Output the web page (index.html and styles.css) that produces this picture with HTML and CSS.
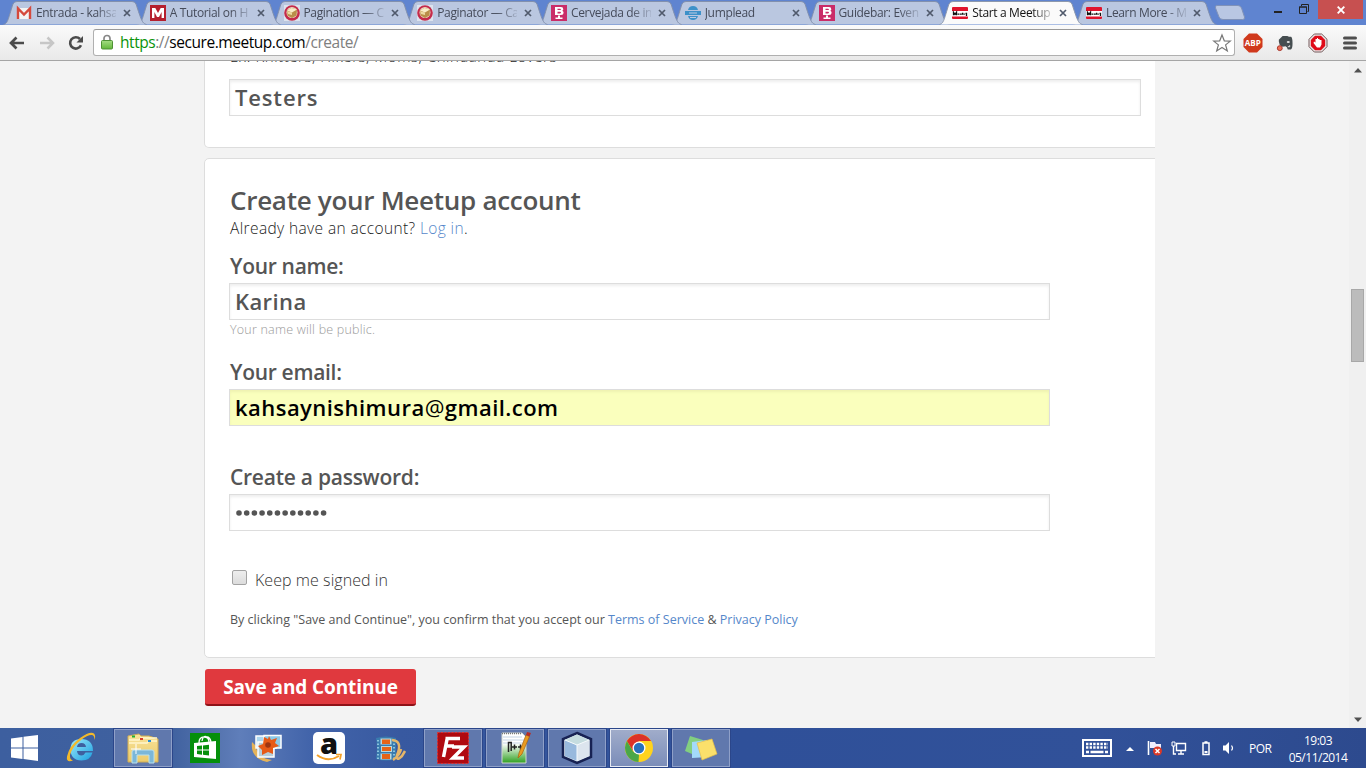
FILE: index.html
```html
<!DOCTYPE html>
<html lang="en">
<head>
<meta charset="utf-8">
<title>Start a Meetup</title>
<link rel="stylesheet" href="styles.css">
</head>
<body>
<svg class="defs" width="0" height="0" aria-hidden="true">
  <defs>
    <linearGradient id="lock" x1="0" y1="0" x2="0" y2="1"><stop offset="0" stop-color="#a5dc84"/><stop offset="1" stop-color="#62b83a"/></linearGradient>
    <linearGradient id="ie" x1="0" y1="0" x2="1" y2="1"><stop offset="0" stop-color="#9be9fb"/><stop offset="1" stop-color="#1b9fe0"/></linearGradient>
    <linearGradient id="npp" x1="0" y1="0" x2="0" y2="1"><stop offset=".35" stop-color="#fff"/><stop offset="1" stop-color="#2fa020"/></linearGradient>
    <linearGradient id="folder" x1="0" y1="0" x2="0" y2="1"><stop offset="0" stop-color="#f8e39a"/><stop offset="1" stop-color="#eccb6a"/></linearGradient>
    <symbol id="tab-shape" viewBox="0 0 144 25"><path d="M.5 24.5C5 23.5 5 19 10 4Q11 1.500 14 1.500H129Q132 1.500 133 4C138 19 139 23.500 143.500 24.500"/></symbol>
    <symbol id="close" viewBox="0 0 8 8"><path d="M1 1l6 6M7 1L1 7" stroke="#505a6c" stroke-width="1.700"/></symbol>
    <symbol id="cake" viewBox="0 0 16 16"><path fill="#dce3ee" d="M0 0h16v16H0z"/><circle cx="8" cy="8" r="7.800" fill="#c42b4b"/><circle cx="8" cy="7.500" r="5.500" fill="#ecd9c0"/><path d="M3 5.500L7.500 3l5.500 1.500-.5 6L8 13l-4.500-2.500z" fill="#b98e48"/><path d="M3 5.500L7.500 3l5.500 1.500L8 7.500z" fill="#f9edc8"/><path d="M3 6l5 1.500V10L4 9z" fill="#ecd9a0"/></symbol>
    <symbol id="badge" viewBox="0 0 16 16"><path fill="#ca2c68" d="M0 0h16v16H0z"/><path fill="#fff" d="M4 2h6q2.300 0 2.300 2.200 0 1.200-1.100 1.600 1.400.400 1.400 1.900 0 2.300-2.600 2.300H4zM7 10.500h2v2h2.500V14h-7v-1.500H7z"/><path fill="#ca2c68" d="M6.500 3.700H9q.900 0 .900.700t-.900.700H6.500zM6.500 6.800H9q1 0 1 .800t-1 .800H6.500z"/></symbol>
    <symbol id="meetup" viewBox="0 0 16 12"><rect width="16" height="12" rx="1" fill="#e0142c"/><path fill="#fff" d="M0 4h16v5.500H0z"/><path d="M1.500 8.200V5.300l1.500 2 1.500-2v2.900M5.500 7.200h2M8 7.200h1.800M10.600 5.800v2M11.500 7.200h1.300M13.500 6.500h1v2.500" stroke="#111" stroke-width="1.300" fill="none"/></symbol>
  </defs>
</svg>
<header class="tabs">
  <div class="tab" style="--i:9"><svg class="shape"><use href="#tab-shape"/></svg><svg class="fav" viewBox="0 0 16 16"><path fill="#f3f3f3" d="M1 3h14v11H1z"/><path fill="none" stroke="#d5493c" stroke-width="2.400" d="M2 14V3.500L8 9.500l6-6V14"/></svg><span class="title">Entrada - kahsa</span><svg class="x"><use href="#close"/></svg></div>
  <div class="tab" style="--i:8"><svg class="shape"><use href="#tab-shape"/></svg><svg class="fav" viewBox="0 0 16 16"><path fill="#b51f2e" d="M0 0h16v16H0z"/><path fill="#fff" d="M2 13V3h3.300L8 8l2.700-5H14v10h-2.400V7L9 12H7L4.400 7v6z"/></svg><span class="title">A Tutorial on H</span><svg class="x"><use href="#close"/></svg></div>
  <div class="tab" style="--i:7"><svg class="shape"><use href="#tab-shape"/></svg><svg class="fav"><use href="#cake"/></svg><span class="title">Pagination — C</span><svg class="x"><use href="#close"/></svg></div>
  <div class="tab" style="--i:6"><svg class="shape"><use href="#tab-shape"/></svg><svg class="fav"><use href="#cake"/></svg><span class="title">Paginator — Ca</span><svg class="x"><use href="#close"/></svg></div>
  <div class="tab" style="--i:5"><svg class="shape"><use href="#tab-shape"/></svg><svg class="fav"><use href="#badge"/></svg><span class="title">Cervejada de in</span><svg class="x"><use href="#close"/></svg></div>
  <div class="tab" style="--i:4"><svg class="shape"><use href="#tab-shape"/></svg><svg class="fav" viewBox="0 0 16 16"><path fill="#3d91c9" d="M3 5q1-4 5-4t5 4zM0 6h16v4H0zM3 11h10q-1 4-5 4t-5-4z"/><path d="M4 8h8M5 12.500h6" stroke="#bccae1"/></svg><span class="title">Jumplead</span><svg class="x"><use href="#close"/></svg></div>
  <div class="tab" style="--i:3"><svg class="shape"><use href="#tab-shape"/></svg><svg class="fav"><use href="#badge"/></svg><span class="title">Guidebar: Even</span><svg class="x"><use href="#close"/></svg></div>
  <div class="tab active" style="--i:12"><svg class="shape"><use href="#tab-shape"/></svg><svg class="fav"><use href="#meetup"/></svg><span class="title">Start a Meetup</span><svg class="x"><use href="#close"/></svg></div>
  <div class="tab" style="--i:1"><svg class="shape"><use href="#tab-shape"/></svg><svg class="fav"><use href="#meetup"/></svg><span class="title">Learn More - M</span><svg class="x"><use href="#close"/></svg></div>
  <svg class="newtab" viewBox="0 0 32 16"><path d="M3 .500h21q2.500 0 3.500 2.500l3 9q.800 2.500-2 2.500H9q-3 0-4-2.500L1.500 3Q.800.500 3 .500z" fill="#b9c7e3" stroke="#8092b8"/></svg>
  <div class="wincontrols">
    <svg class="min" viewBox="0 0 8 2"><path d="M0 0h8v2H0z" fill="#222"/></svg>
    <svg class="restore" viewBox="0 0 10 10"><path d="M.500 3h7v6.500h-7zM0 3h8M2.500 2V.500h7v7H8.500" fill="none" stroke="#222"/></svg>
    <div class="winclose"><svg viewBox="0 0 8 8"><path d="M.700.700l6.600 6.600M7.300.700L.700 7.300" stroke="#fff" stroke-width="1.900"/></svg></div>
  </div>
</header>
<nav class="toolbar">
  <svg class="back" viewBox="0 0 16 14"><path d="M15 7H2M7.500 1.500L2 7l5.500 5.500" fill="none" stroke="#4b4b4b" stroke-width="2.700"/></svg>
  <svg class="fwd" viewBox="0 0 16 14"><path d="M1 7h13M8.500 1.500L14 7l-5.500 5.500" fill="none" stroke="#c6c6c6" stroke-width="2.500"/></svg>
  <svg class="reload" viewBox="0 0 16 16"><path d="M13 10.300A5.700 5.700 0 1 1 12 4" fill="none" stroke="#4b4b4b" stroke-width="2.600"/><path d="M15 1v6.500H8.500z" fill="#4b4b4b"/></svg>
  <div class="urlbar">
    <svg class="lock" viewBox="0 0 12 16"><path d="M3 8V4.500a3 3 0 0 1 6 0V8" fill="none" stroke="#888" stroke-width="1.700"/><rect x=".5" y="6.500" width="11" height="8.500" rx="1" fill="url(#lock)" stroke="#4e9135"/></svg>
    <span class="url"><span class="scheme">https</span>://<b>secure.meetup.com</b>/create/</span>
    <svg class="star" viewBox="0 0 18 18"><path d="M9 1l2.300 5.800 6 .300-4.700 3.800 1.700 6L9 13.500l-5.300 3.400 1.700-6L.700 7.100l6-.300z" fill="#fff" stroke="#777" stroke-width="1.200"/></svg>
  </div>
  <svg class="ext abp" viewBox="0 0 20 20"><path d="M6 .500h8L19.500 6v8L14 19.500H6L.500 14V6z" fill="#d0391c"/><text x="9.800" y="13.300" text-anchor="middle" textLength="16" lengthAdjust="spacingAndGlyphs" class="abptext">ABP</text></svg>
  <svg class="ext ever" viewBox="0 0 18 18"><path d="M3 6l4-4h5q1.500 1 4 1 1.500 1 1.500 7 0 6-2 6.500h-3l-1-2.500-1.500-1-3 .5-3-1.500-1-4z" fill="#454d50"/><path d="M12 8h2v1h-2zM12.500 13.500h2V12" stroke="#ddd" fill="#ddd"/><circle cx="4" cy="15" r="2.600" fill="#f07058" stroke="#a63328"/></svg>
  <svg class="ext hand" viewBox="0 0 20 20"><path d="M6.300 1h7.400L19 6.300v7.400L13.700 19H6.300L1 13.700V6.300z" fill="#e8e8e8" stroke="#76595a"/><path d="M7 2.800h6L17.200 7v6L13 17.200H7L2.800 13V7z" fill="#e00b18"/><path d="M6 8.500l1.500 1V6H9V5h1v1h1v.500h1V7h1.500v4.500L12 14.500H9L5.500 10z" fill="#fff"/></svg>
  <svg class="menu" viewBox="0 0 14 14"><path d="M1.500 2h11M1.500 7h11M1.500 12h11" stroke="#4f4f4f" stroke-width="3" stroke-linecap="round"/></svg>
</nav>
<main class="viewport">
  <div class="page">
    <section class="card first">
      <p class="hint">Ex: Knitters, Hikers, Moms, Chihuahua Lovers</p>
      <div class="field"><span class="t-testers">Testers</span></div>
    </section>
    <section class="card account">
      <h1>Create your Meetup account</h1>
      <p class="login">Already have an account? <a>Log in</a>.</p>
      <label class="l-name">Your name:</label>
      <div class="field"><span class="t-karina">Karina</span></div>
      <p class="note">Your name will be public.</p>
      <label class="l-email">Your email:</label>
      <div class="field autofill"><span class="t-mail">kahsaynishimura<span class="at">@</span>gmail.com</span></div>
      <label class="l-pass">Create a password:</label>
      <div class="field"><svg class="dots" viewBox="0 0 92 6"><path d="M4 3h88" stroke="#555" stroke-width="5.600" stroke-linecap="round" stroke-dasharray="0 7.690"/></svg></div>
      <div class="keep"><i class="checkbox"></i><span>Keep me signed in</span></div>
      <p class="terms">By clicking "Save and Continue", you confirm that you accept our <a>Terms of Service</a> &amp; <a>Privacy Policy</a></p>
    </section>
    <div class="save"><span>Save and Continue</span></div>
  </div>
  <div class="scrollbar">
    <svg viewBox="0 0 8 5"><path d="M4 0l4 4.500H0z" fill="#505050"/></svg>
    <div class="thumb"></div>
    <svg viewBox="0 0 8 5"><path d="M0 .500h8L4 5z" fill="#505050"/></svg>
  </div>
</main>
<footer class="taskbar">
  <div class="start"><svg viewBox="0 0 27 26"><path d="M0 3.500L11.500 2v10.500H0zM12.500 1.800L27 0v12.500H12.500zM0 13.500h11.500V24L0 22.500zM12.500 13.500H27V26l-14.500-1.900z" fill="#fff"/></svg></div>
  <div class="app"><svg viewBox="0 0 32 32"><path d="M27.500 20.500q-2 8-11 8Q5.500 28 5.500 17.500T16 7Q28 7 28 19H12q.500 4.500 4.500 4.500 2.500 0 4-3zM12 15h9q-.500-4-4.500-4T12 15z" fill="url(#ie)" fill-rule="evenodd"/><path d="M8 28.500q-7 2.500-6-4Q4 14 15 6q10-7 14-4.500 2 2 .500 6.500 0-4.500-2.500-5-4-.500-11 5Q7 15 5 23q-.500 4.500 3 5.500z" fill="#f3b92b"/></svg></div>
  <div class="app framed"><svg viewBox="0 0 32 32"><path d="M1 4l11-2 2 2h8l9 3v23H1z" fill="url(#folder)" stroke="#d1ad56"/><path d="M2 8h10l2-2h16M2 11h18l2-2h8" stroke="#fff6cd" stroke-width="1.500" fill="none"/><path fill="#20b030" d="M5 3.500h3v2H5z"/><path fill="#da3e2a" d="M13 6h3v2h-3z"/><path fill="#258ed8" d="M21 8h3v2h-3z"/><path d="M5 31V20q0-2 2-2h18q2 0 2 2v11h-5v-8H10v8z" fill="#7bb7d8" stroke="#b9e0ee"/><path d="M9 12v10M4 17h10" stroke="#fff"/></svg></div>
  <div class="app"><svg viewBox="0 0 32 32"><path fill="#058f0b" d="M1 1h30v30H1z"/><path d="M5 11l22-2v18L5 25z" fill="#fff"/><path d="M10 11q0-6 5-6t5 5M13 9q1-6 5-4 3 0 4 5" fill="none" stroke="#fff" stroke-width="1.300"/><path d="M8 14l5-.500v4H8zM14 13.400l6-.700v4.800h-6zM8 18.500h5v4.200L8 22zM14 18.500h6v5l-6-.700z" fill="#058f0b"/></svg></div>
  <div class="app"><svg viewBox="0 0 32 32"><path d="M1 10q-2 16 15 20l5-2Q6 26 5 14z" fill="#e5b35a"/><path d="M5 4h20v12H5z" fill="#acd7ef" stroke="#fff" stroke-width="1.500"/><path d="M7 10h16v15H7z" fill="#b6ceda" stroke="#fff" stroke-width="1.500"/><path d="M13 3.500h17V16H13z" fill="#8dcae8" stroke="#fff" stroke-width="1.500"/><path d="M18 4l2 4 6-2-2 5 4 3-6 2v6l-5-2-6 3v-5l-4-4 5-2 1-7 4 2z" fill="#e65a17"/><circle cx="17" cy="13" r="2.800" fill="#9d3512"/></svg></div>
  <div class="app"><svg viewBox="0 0 32 32"><rect width="32" height="32" rx="5" fill="#fff"/><text x="16" y="21.500" text-anchor="middle" class="amazon">a</text><path d="M4 23q11 8 22 1" fill="none" stroke="#f4a129" stroke-width="2"/><path d="M23 22.500h5l-1 5" fill="none" stroke="#f4a129" stroke-width="1.700"/></svg></div>
  <div class="app"><svg viewBox="0 0 32 32"><path d="M1 6q10-3 20 0v21q-10 3-20 0Q3 16 1 6z" fill="#397bae"/><path d="M5.500 6.500h11v6h-11zM6 14h11v6H6zM5.500 21.500h11v6h-11z" fill="#b9d8dc"/><path d="M7 7.500h8V12H7zM7 15h9v4H7zM7 22h8v5H7z" fill="#e66417"/><path d="M3 8v19M19 8v19" stroke="#a6dbec" stroke-width="1.500" stroke-dasharray="1.500 2"/><path d="M17 8q11 1 5 15-1 7 5 1l3-5M18 28q7-5 8-11" fill="none" stroke="#e5b669" stroke-width="2.500"/></svg></div>
  <div class="app framed"><svg viewBox="0 0 32 32"><path fill="#b00a10" stroke="#d33" stroke-dasharray="2 1.500" d="M.500.500h31v31H.500z"/><path d="M8.500 6.500H23M9 14h8M10.500 5L6.500 25M15 15h12L16 26h11" fill="none" stroke="#fff" stroke-width="3.500"/></svg></div>
  <div class="app framed"><svg viewBox="0 0 32 32"><path d="M3 1h20l4 4v26H3z" fill="url(#npp)" stroke="#d0d6d0"/><path d="M4 5h19M4 8h22M4 11h22" stroke="#c4d4e4"/><path d="M3 1.500h19" stroke="#777" stroke-dasharray="1 1" stroke-width="1.500"/><path d="M9.500 20v-9.500h2.700V19M13 15h5M15.500 12.500v5M19 15h5M21.500 12.500v5" fill="none" stroke="#222" stroke-width="1.500"/><path d="M19 26l1-5L27 3l3.500 1.500L23 22z" fill="#e99b21" stroke="#a76210" stroke-width=".7"/><path d="M27 3l1-3 4 1-1.500 3.500z" fill="#b92d24"/></svg></div>
  <div class="app framed"><svg viewBox="0 0 32 32"><path d="M16 1l14 6v18l-14 6-14-6V7z" fill="#e3edf4" stroke="#172253" stroke-width="2.500"/><path d="M4 8l12 5v16L4 24z" fill="#98b9dd"/><path d="M4 8l12-5.500L28 8l-12 5z" fill="#c5dcdf"/><path d="M16 13l12-5v16l-12 5z" fill="#dce5ee"/><path d="M4 8l12 5 12-5M16 13v16" fill="none" stroke="#f5fafc"/></svg></div>
  <div class="app framed current"><svg viewBox="0 0 32 32"><circle cx="16" cy="16" r="14" fill="#ffd31d"/><path d="M16 9h12.100A14 14 0 0 0 3.900 9L10 19z" fill="#dc3227"/><path d="M3.900 9L10 19.500l6 3L15.500 30A14 14 0 0 1 3.900 9z" fill="#4aa747"/><circle cx="16" cy="16" r="6.500" fill="#fff"/><circle cx="16" cy="16" r="5.200" fill="#2871bd"/></svg></div>
  <div class="app framed"><svg viewBox="0 0 32 32"><path d="M5 4l13 4-4 17L0 19z" fill="#82cf80"/><path d="M7 10l15-2 1 17-16 1z" fill="#a3dafa"/><path d="M12 11l15-4 5 15-15 6z" fill="#fbe06b" stroke="#e5bf48" stroke-width=".7"/></svg></div>
  <div class="tray">
    <svg class="kbd" viewBox="0 0 30 18"><path d="M1 1h28v16H1z" fill="none" stroke="#fff" stroke-width="2"/><path d="M4 5h22M4 8.500h22" stroke="#fff" stroke-width="2.400" stroke-dasharray="2.400 1.200"/><path d="M4 13h3M8.500 13h13M23 13h3" stroke="#fff" stroke-width="2.400"/></svg>
    <svg class="up" viewBox="0 0 8 4"><path d="M4 0l4 4H0z" fill="#fff"/></svg>
    <svg class="flag" viewBox="0 0 16 16"><path d="M1.500 1v14" stroke="#fff" stroke-width="1.600"/><path d="M3 2h5l1 2h5v6H9L8 8H3z" fill="#eef"/><circle cx="10.500" cy="11" r="4.500" fill="#dc3826"/><path d="M8.500 9l4 4M12.500 9l-4 4" stroke="#fff" stroke-width="1.500"/></svg>
    <svg class="net" viewBox="0 0 16 14"><path d="M5.500 2.500h9v7h-9zM10 10v3M7 13h6M2.500 5v8H5" fill="none" stroke="#fff" stroke-width="1.400"/><path d="M1 1h3v4H1z" fill="#304f96" stroke="#fff"/></svg>
    <svg class="bat" viewBox="0 0 10 16"><path d="M2 3h6v11.500H2zM3.500 2h3" fill="none" stroke="#fff" stroke-width="1.500"/><path d="M3.500 11h3v2h-3z" fill="#fff"/></svg>
    <svg class="vol" viewBox="0 0 14 14"><path d="M1 4.500h2.500L7 1v12L3.500 9.500H1z" fill="#fff"/><path d="M9.500 4.500q2 2.500 0 5" fill="none" stroke="#fff" stroke-width="1.200"/></svg>
    <span class="lang">POR</span>
    <div class="clock"><span>19:03</span><span>05/11/2014</span></div>
  </div>
</footer>
</body>
</html>
```
FILE: styles.css
```css
* { box-sizing: border-box; }
body { margin: 0; width: 1366px; height: 768px; overflow: hidden; display: flex; flex-direction: column; font-family: "Open Sans", "Noto Sans", sans-serif; }
svg { display: block; flex: none; overflow: visible; }
.defs { position: absolute; }
p, h1 { margin: 0; font-weight: 400; }

/* Tab strip */
.tabs { display: flex; height: 25px; padding-left: 3px; background: #5f84d0; flex: none; position: relative; z-index: 1; }
.tab { position: relative; z-index: var(--i); flex: none; width: 133.75px; height: 25px; display: flex; align-items: center; padding-left: 13px; }
.shape { position: absolute; left: 0; top: 0; width: 144px; height: 25px; fill: #bac7e0; stroke: #8290ad; }
.active .shape { fill: #fafafa; stroke: #8d98ac; }
.fav { position: relative; width: 16px; height: 16px; margin-top: 1px; }
.title { position: relative; width: 80px; margin-left: 4px; overflow: hidden; white-space: nowrap; font-size: 12px; line-height: 18px; letter-spacing: -.35px; color: #454b5a; -webkit-mask-image: linear-gradient(90deg, #000 60px, transparent 84px); mask-image: linear-gradient(90deg, #000 60px, transparent 84px); }
.active .title { color: #111; }
.x { position: relative; width: 8px; height: 8px; margin: 1px 0 0 7px; }
.newtab { width: 32px; height: 16px; margin: 5px 0 0 7px; }
.wincontrols { display: flex; margin: 0 3px 0 auto; height: 19px; }
.min { width: 8px; height: 2px; margin-top: 11px; }
.restore { width: 10px; height: 10px; margin: 4px 9px 0 17px; }
.winclose { width: 45px; height: 19px; background: #c75050; display: grid; place-items: center; }
.winclose svg { width: 8px; height: 8px; }

/* Toolbar */
.toolbar { display: flex; align-items: center; height: 36px; flex: none; background: linear-gradient(#fafafa, #e9e9e9); border-bottom: 1px solid #a5a5a5; padding-left: 9px; }
.back, .fwd { width: 16px; height: 14px; }
.fwd { margin-left: 14px; }
.reload { width: 16px; height: 16px; margin-left: 13px; }
.urlbar { display: flex; align-items: center; width: 1142px; height: 27px; margin-left: 9px; background: #fff; border: 1px solid #b0b0b0; border-top-color: #999; border-radius: 3px; padding-left: 7px; }
.lock { width: 12px; height: 16px; margin-top: -1px; }
.url { margin: -1px 0 0 7px; font-size: 15.5px; line-height: 22px; letter-spacing: -.45px; color: #808080; white-space: nowrap; }
.url b { font-weight: 400; color: #000; }
.scheme { color: #0a930a; }
.star { width: 18px; height: 18px; margin: 1px 3px 0 auto; }
.ext { width: 20px; height: 20px; margin-left: 8px; }
.abptext { font: 700 9px "Open Sans", sans-serif; fill: #fff; }
.ever { width: 17px; height: 17px; margin-left: 13px; }
.hand { margin-left: 15px; }
.menu { width: 14px; height: 14px; margin-left: 15px; }

/* Page */
.viewport { display: flex; height: 667px; flex: none; overflow: hidden; background: #f3f3f3; color: #555; }
.page { width: 951px; margin-left: 204px; overflow: hidden; }
.card { width: 960px; background: #fff; border: 1px solid #ddd; border-radius: 5px; padding-left: 24px; }
.first { display: flow-root; height: 87px; border-top: 0; border-radius: 0 0 5px 5px; }
.hint { height: 12px; line-height: 12px; margin: -11px 0 17px 1px; font-size: 15px; font-weight: 300; color: #222; letter-spacing: .56px; white-space: nowrap; }
.account { height: 500px; margin-top: 10px; padding-top: 24px; }
.field { width: 821px; height: 37px; border: 1px solid #ddd; background: #fff; box-shadow: inset 0 2px 3px #eee; padding-left: 5px; display: flex; align-items: center; font-size: 22px; font-weight: 600; line-height: 34px; }
.field span { padding-bottom: 1px; }
.first .field { width: 912px; }
.t-testers { letter-spacing: .85px; }
.t-karina { letter-spacing: .4px; }
.t-mail { letter-spacing: .46px; }
.at { font-weight: 400; }
h1 { font-size: 26px; font-weight: 600; line-height: 34px; height: 34px; letter-spacing: -.28px; padding-left: 1px; }
.login { font-size: 15.5px; line-height: 22px; font-weight: 300; color: #222; letter-spacing: .38px; padding-left: 1px; }
a { color: #5587ca; }
label { display: block; font-size: 21px; font-weight: 600; line-height: 28px; height: 28px; letter-spacing: -.3px; padding-left: 1px; }
.l-name { margin: 13px 0 3px; }
.note { font-size: 12.5px; line-height: 20px; height: 18px; color: #999; font-weight: 300; letter-spacing: .22px; padding-left: 1px; }
.l-email { margin: 20px 0 3px; }
.field.autofill { background: #faffbd; color: #000; box-shadow: inset 0 2px 3px #eef2b1; }
.l-pass { margin: 37px 0 3px; letter-spacing: -.25px; }
.dots { width: 92px; height: 6px; }
.keep { display: flex; height: 24px; margin-top: 38px; padding-left: 3px; font-size: 16px; line-height: 22px; font-weight: 300; letter-spacing: .06px; color: #333; }
.checkbox { width: 15px; height: 15px; margin: 1px 8px 0 0; border: 1px solid #a3a3a3; border-radius: 2px; background: linear-gradient(#eee, #dcdcdc); }
.terms { margin-top: 17px; padding-left: 1px; font-size: 12.5px; line-height: 20px; white-space: nowrap; }
.save { width: 211px; height: 37px; margin: 11px 0 0 1px; border-radius: 3px; background: #e0393e; border-bottom: 2px solid #8f1218; color: #fff; font-size: 19px; font-weight: 700; line-height: 36px; text-align: center; letter-spacing: -.1px; }
.scrollbar { width: 17px; margin-left: auto; background: #f0f0f0; display: flex; flex-direction: column; align-items: center; padding: 7px 0 6px; }
.scrollbar svg { width: 8px; height: 5px; }
.thumb { width: 13px; height: 73px; margin: 216px 0 auto; background: #bcbcbc; border: 1px solid #a8a8a8; }

/* Taskbar */
.taskbar { display: flex; height: 40px; flex: none; background: linear-gradient(90deg, #3d5f9f 0, #3f619f 170px, #5573ae 215px, #5f7eba 240px, #4264aa 310px, #3859a0 400px, #2f5099 740px, #315199 1100px, #2d4a8e 1366px); }
.start { width: 50px; padding-right: 1px; display: grid; place-items: center; }
.start svg { width: 27px; height: 26px; }
.app { width: 58px; height: 38px; margin: 1px 2px; display: grid; place-items: center; border: 1px solid transparent; }
.app svg { width: 32px; height: 32px; }
.framed { background: #6078ad; border-color: #8fa0c8; outline: 1px solid #2b468a; outline-offset: 0; }
.current { background: linear-gradient(#a0acca, #7b8db9); border-color: #e6eaf3; }
.amazon { font: 800 29px "Open Sans", sans-serif; fill: #111; }
.tray { margin-left: auto; display: flex; align-items: center; color: #fff; font-size: 12px; letter-spacing: -.5px; }
.kbd { width: 30px; height: 18px; }
.up { width: 8px; height: 4px; margin: 2px 0 0 14px; }
.flag { width: 16px; height: 16px; margin-left: 13px; }
.net { width: 16px; height: 14px; margin-left: 8px; }
.bat { width: 10px; height: 16px; margin-left: 14px; }
.vol { width: 14px; height: 14px; margin-left: 11px; }
.lang { width: 25px; margin-left: 13px; }
.clock { display: flex; flex-direction: column; align-items: center; width: 60px; margin: 1px 18px 0 14px; line-height: 17px; white-space: nowrap; }
```
